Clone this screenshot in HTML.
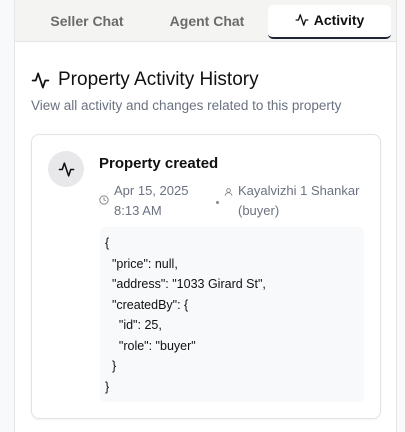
<!DOCTYPE html>
<html><head><style>
body{margin:0;width:405px;height:432px;background:#f8f9fa;font-family:"Liberation Sans",sans-serif;overflow:hidden;position:relative}
.panel{position:absolute;left:14px;top:0;width:381px;height:432px;background:#fff;border-left:1px solid #e5e5e5;border-right:1px solid #e5e5e5}
.tabs{position:absolute;left:0;top:0;width:381px;height:41px;background:#f4f4f2;border-bottom:1px solid #e5e5e5}
.tab{position:absolute;top:5px;height:33px;line-height:33px;text-align:center;font-size:14px;color:#6b6b6b;font-weight:bold}
.act{left:253px;width:123px;background:#fff;color:#111;border-radius:5px;border-bottom:2px solid #1e2433;box-sizing:border-box;height:34px;line-height:31px}
.h{position:absolute;left:16px;top:69px;font-size:19px;color:#111;display:flex;align-items:center;gap:8px}
.sub{position:absolute;left:16px;top:98px;font-size:13.5px;color:#6b7280}
.card{position:absolute;left:16px;top:134px;width:348px;height:283px;border:1px solid #e3e3e3;border-radius:8px;box-shadow:0 1px 2px rgba(0,0,0,.05)}
.av{position:absolute;left:16px;top:16px;width:36px;height:36px;border-radius:50%;background:#e8e8ea;display:flex;align-items:center;justify-content:center}
.et{position:absolute;left:67px;top:20px;font-size:15px;font-weight:bold;color:#111}
.meta{position:absolute;top:46px;font-size:13px;color:#6b7280;line-height:20px}
.code{position:absolute;left:68px;top:92px;width:264px;height:175px;background:#f8f9fb;border-radius:5px;font-size:12.5px;color:#111;line-height:20.5px;padding:6px 0 0 5px;box-sizing:border-box;white-space:pre}
</style></head><body>
<div class="panel">
<div class="tabs">
<div class="tab" style="left:12px;width:120px">Seller Chat</div>
<div class="tab" style="left:132px;width:120px">Agent Chat</div>
<div class="tab act"><svg width="14" height="14" viewBox="0 0 24 24" fill="none" stroke="#111" stroke-width="2.2" stroke-linecap="round" stroke-linejoin="round" style="vertical-align:-2px;margin-right:5px"><path d="M22 12h-4l-3 9L9 3l-3 9H2"/></svg>Activity</div>
</div>
<div class="h"><svg width="19" height="19" viewBox="0 0 24 24" fill="none" stroke="#111" stroke-width="2.2" stroke-linecap="round" stroke-linejoin="round"><path d="M22 12h-4l-3 9L9 3l-3 9H2"/></svg>Property Activity History</div>
<div class="sub">View all activity and changes related to this property</div>
<div class="card">
<div class="av"><svg width="17" height="17" viewBox="0 0 24 24" fill="none" stroke="#111" stroke-width="2.2" stroke-linecap="round" stroke-linejoin="round"><path d="M22 12h-4l-3 9L9 3l-3 9H2"/></svg></div>
<div class="et">Property created</div>
<div class="meta" style="left:67px"><svg width="10" height="10" viewBox="0 0 24 24" fill="none" stroke="#888" stroke-width="2.4" style="position:absolute;left:0;top:14px"><circle cx="12" cy="12" r="10"/><path d="M12 6v6l4 2"/></svg><div style="margin-left:15px">Apr 15, 2025<br>8:13 AM</div></div>
<div style="position:absolute;left:184px;top:66px;width:3px;height:3px;border-radius:50%;background:#888"></div>
<div class="meta" style="left:192px"><svg width="9" height="10" viewBox="0 0 24 24" fill="none" stroke="#888" stroke-width="2.4" style="position:absolute;left:0;top:6px"><circle cx="12" cy="8" r="5"/><path d="M3 22c0-5 4-8 9-8s9 3 9 8"/></svg><div style="margin-left:14px">Kayalvizhi 1 Shankar<br>(buyer)</div></div>
<div class="code">{
  "price": null,
  "address": "1033 Girard St",
  "createdBy": {
    "id": 25,
    "role": "buyer"
  }
}</div>
</div>
</div>
</body></html>
